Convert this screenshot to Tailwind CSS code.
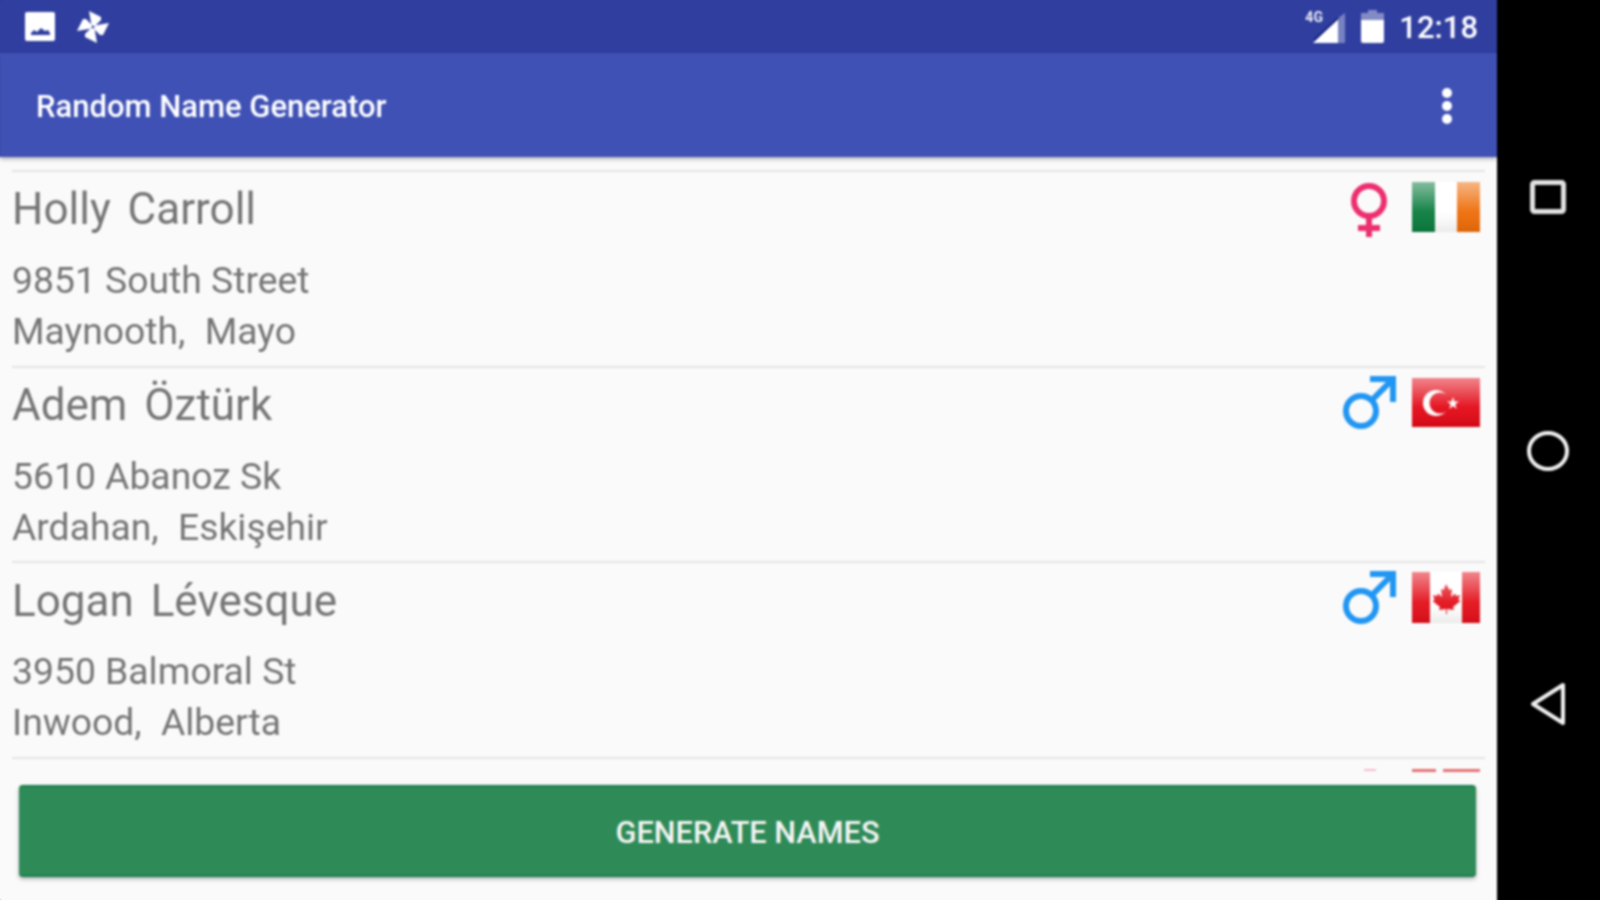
<!DOCTYPE html>
<html lang="en">

<head>
    <meta charset="UTF-8">
    <meta name="viewport" content="width=device-width, initial-scale=1.0">
    <script src="https://cdn.jsdelivr.net/npm/@tailwindcss/browser@4"></script>
    <title>Random Name Generator</title>
</head>

<body class="bg-black overflow-hidden">
    <svg width="0" height="0" class="absolute">
        <defs>
            <linearGradient id="gloss" x1="0" y1="0" x2="0" y2="1">
                <stop offset="0" stop-color="#fff" stop-opacity="0.5" />
                <stop offset="0.6" stop-color="#fff" stop-opacity="0.05" />
                <stop offset="1" stop-color="#000" stop-opacity="0.08" />
            </linearGradient>
        </defs>
    </svg>

    <div class="flex w-[1600px] h-[900px] font-['Roboto',sans-serif] blur-[1px]">
        <div class="w-[1497px] h-full flex flex-col bg-[#fafafa] shadow-[-8px_0_0_#fafafa,0_8px_0_#fafafa]">

            <!-- status bar -->
            <div class="h-[53px] shrink-0 bg-[#303f9f] flex items-center pl-[25px] pr-[19px] text-white shadow-[-8px_0_0_#303f9f,0_-8px_0_#303f9f]">
                <svg width="30" height="29" viewBox="0 0 30 29">
                    <path fill="#fff" d="M2 0h26a2 2 0 0 1 2 2v25a2 2 0 0 1-2 2H2a2 2 0 0 1-2-2V2a2 2 0 0 1 2-2z" />
                    <path fill="#303f9f" d="M6 23v-2l3-3 3 2 4-4 4 3 3-1 2 3v2z" />
                </svg>
                <svg class="ml-[21px]" width="34" height="34" viewBox="0 0 34 34" fill="#fff">
                    <path d="M15.500 15.500L13 1l12 6v3l-6 6z" />
                    <path transform="rotate(90 17 17)" d="M15.500 15.500L13 1l12 6v3l-6 6z" />
                    <path transform="rotate(180 17 17)" d="M15.500 15.500L13 1l12 6v3l-6 6z" />
                    <path transform="rotate(270 17 17)" d="M15.500 15.500L13 1l12 6v3l-6 6z" />
                </svg>
                <div class="ml-auto relative w-[40px] h-[30px] mt-[2px]">
                    <svg class="absolute right-0 top-0" width="32" height="30" viewBox="0 0 32 30">
                        <path fill="#fff" fill-opacity="0.35" d="M32 0v30H24V6z" />
                        <path fill="#fff" d="M25 6v24H0z" />
                        <path stroke="#1a237e" stroke-width="2" d="M1 27L25 5" />
                    </svg>
                    <span class="absolute left-0 -top-[4px] text-[14px] leading-[16px] font-bold text-white/90">4G</span>
                </div>
                <svg class="ml-[16px]" width="23" height="33" viewBox="0 0 23 33">
                    <path fill="#fff" fill-opacity="0.4" d="M7 0h9v3h7v8H0V3h7z" />
                    <path fill="#fff" d="M0 10h23v21a2 2 0 0 1-2 2H2a2 2 0 0 1-2-2z" />
                </svg>
                <span class="ml-[15px] mt-[2px] text-[31px] leading-none font-medium">12:18</span>
            </div>

            <!-- app bar -->
            <div class="h-[104px] shrink-0 bg-[#3f51b5] flex items-center justify-between pl-[36px] pr-[45px] shadow-[0_2px_4px_rgba(0,0,0,0.3),-8px_0_0_#3f51b5] z-10 text-white">
                <span class="text-[31px] font-medium mt-[5px]">Random Name Generator</span>
                <div class="flex flex-col gap-[3px] mt-[1px]">
                    <span class="w-[10px] h-[10px] rounded-full bg-white"></span>
                    <span class="w-[10px] h-[10px] rounded-full bg-white"></span>
                    <span class="w-[10px] h-[10px] rounded-full bg-white"></span>
                </div>
            </div>

            <!-- name list -->
            <div class="h-[616px] shrink-0 overflow-hidden pt-[13px] px-[12px] text-[#757575]">
                <div class="h-[195.5px] border-t-2 border-[#e4e4e4] relative">
                    <p class="text-[44px] leading-[52px] pt-[11px] [word-spacing:6px]">Holly Carroll</p>
                    <p class="text-[37.300px] leading-[51px] mt-[20px]">9851 South Street</p>
                    <p class="text-[37.300px] leading-[51px] [word-spacing:10px]">Maynooth, Mayo</p>
                    <div class="absolute top-[10px] right-[5px] flex items-start gap-[25px]">
                        <svg class="mt-[1px]" width="36" height="54" viewBox="0 0 36 54">
                            <g fill="none" stroke="#ec2f70" stroke-width="6">
                                <circle cx="18" cy="18" r="15" />
                                <path d="M18 33v21M7 45h22" />
                            </g>
                        </svg>
                        <svg width="68" height="50" viewBox="0 0 68 50">
                            <rect width="23" height="50" fill="#0a7c3e" />
                            <rect x="23" width="22" height="50" fill="#fff" />
                            <rect x="45" width="23" height="50" fill="#ee6c08" />
                            <rect width="68" height="50" fill="url(#gloss)" />
                        </svg>
                    </div>
                </div>

                <div class="h-[195.5px] border-t-2 border-[#e4e4e4] relative">
                    <p class="text-[44px] leading-[52px] pt-[11px] [word-spacing:6px]">Adem Öztürk</p>
                    <p class="text-[37.300px] leading-[51px] mt-[20px]">5610 Abanoz Sk</p>
                    <p class="text-[37.300px] leading-[51px] [word-spacing:10px]">Ardahan, Eskişehir</p>
                    <div class="absolute top-[8px] right-[5px] flex items-start gap-[16px]">
                        <svg width="53" height="53" viewBox="0 0 53 53">
                            <g fill="none" stroke="#2196f3" stroke-width="6">
                                <circle cx="18" cy="35" r="15" />
                                <path d="M29 24L50 3M27 3h23v23" />
                            </g>
                        </svg>
                        <svg class="mt-[2px]" width="68" height="49" viewBox="0 0 68 49">
                            <rect width="68" height="49" fill="#e30a17" />
                            <circle cx="24" cy="25" r="13" fill="#fff" />
                            <circle cx="28" cy="25" r="10.500" fill="#e30a17" />
                            <path fill="#fff" d="M41 19l1.500 4.500h4.500l-3.700 2.800 1.400 4.600-3.700-2.800-3.700 2.800 1.400-4.600-3.700-2.800h4.500z" />
                            <rect width="68" height="49" fill="url(#gloss)" />
                        </svg>
                    </div>
                </div>

                <div class="h-[196px] border-t-2 border-[#e4e4e4] relative">
                    <p class="text-[44px] leading-[52px] pt-[12px] [word-spacing:6px]">Logan Lévesque</p>
                    <p class="text-[37.300px] leading-[51px] mt-[19px]">3950 Balmoral St</p>
                    <p class="text-[37.300px] leading-[51px] [word-spacing:10px]">Inwood, Alberta</p>
                    <div class="absolute top-[8px] right-[5px] flex items-start gap-[16px]">
                        <svg width="53" height="53" viewBox="0 0 53 53">
                            <g fill="none" stroke="#2196f3" stroke-width="6">
                                <circle cx="18" cy="35" r="15" />
                                <path d="M29 24L50 3M27 3h23v23" />
                            </g>
                        </svg>
                        <svg class="mt-[1px]" width="68" height="51" viewBox="0 0 68 51">
                            <rect width="68" height="51" fill="#fff" />
                            <rect width="18" height="51" fill="#e3101a" />
                            <rect x="50" width="18" height="51" fill="#e3101a" />
                            <path fill="#e3101a" d="M34 12l3.500 6 2.500-1-1 8 4-3.500 1 2.500 4-1-1.500 5 2 1-7.500 6 1 3-7-1v5h-1v-5l-7 1 1-3-7.500-6 2-1-1.500-5 4 1 1-2.500 4 3.500-1-8 2.500 1z" />
                            <rect width="68" height="51" fill="url(#gloss)" />
                        </svg>
                    </div>
                </div>

                <!-- next row, cut off by the button -->
                <div class="border-t-2 border-[#e4e4e4] relative h-[40px]">
                    <div class="absolute top-[10px] right-[1px] w-[120px] h-[4px] flex items-start">
                        <span class="w-[12px] h-[2px] bg-[#f8bbd0]"></span>
                        <span class="w-[24px] h-[3px] bg-[#e57373] ml-[36px]"></span>
                        <span class="w-[37px] h-[3px] bg-[#e57373] ml-[7px]"></span>
                    </div>
                </div>
            </div>

            <!-- button -->
            <div class="relative z-10 bg-[#fafafa] flex-1 pt-[12px] px-[19px]">
                <button class="w-[1457px] h-[92px] pt-[5px] rounded-[4px] bg-[#2e8b57] border-y-2 border-[#1a7f4e] shadow-[0_2px_4px_rgba(0,0,0,0.3)] text-[#f4f4f4] text-[30.700px] font-medium">GENERATE NAMES</button>
            </div>
        </div>

        <!-- navigation bar -->
        <div class="flex-1 bg-black flex flex-col items-center pr-[2px] pt-[180px]">
            <svg width="36" height="34" viewBox="0 0 36 34">
                <rect x="2.500" y="2.500" width="31" height="29" rx="2" fill="none" stroke="#e0e0e0" stroke-width="5" />
            </svg>
            <svg class="mt-[217px]" width="42" height="40" viewBox="0 0 42 40">
                <ellipse cx="21" cy="20" rx="19" ry="18" fill="none" stroke="#f0f0f0" stroke-width="4" />
            </svg>
            <svg class="mt-[211px]" width="36" height="44" viewBox="0 0 36 44">
                <path d="M33 3v38L3 22z" fill="none" stroke="#f0f0f0" stroke-width="4" stroke-linejoin="round" />
            </svg>
        </div>
    </div>
</body>

</html>
